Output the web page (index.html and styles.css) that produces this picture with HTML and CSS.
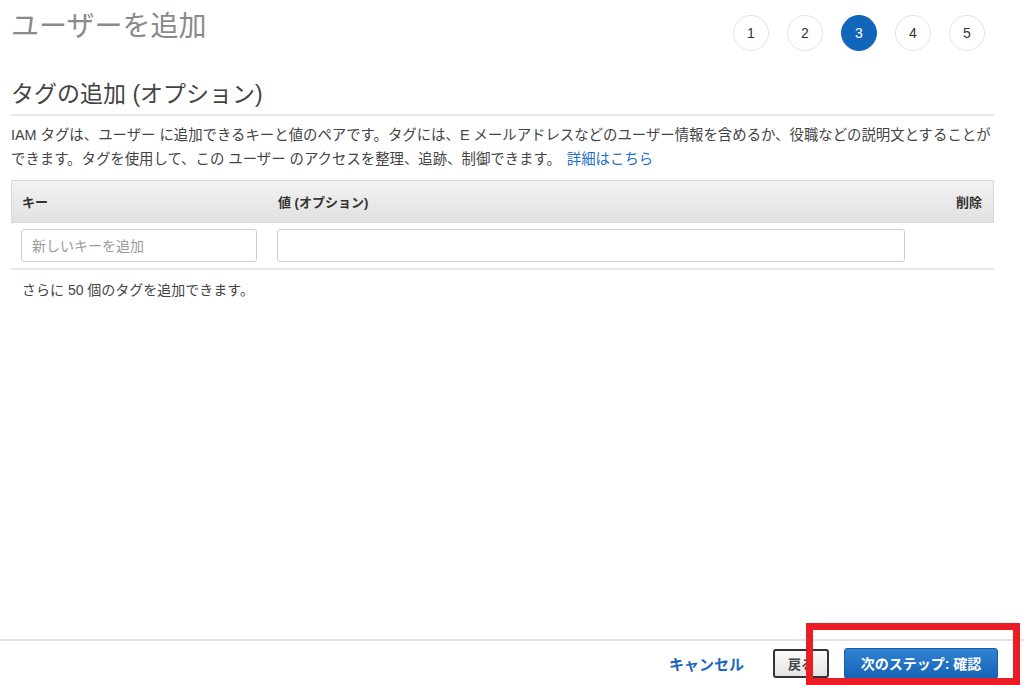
FILE: index.html
```html
<!DOCTYPE html>
<html lang="ja">
<head>
    <meta charset="UTF-8">
    <meta name="viewport" content="width=device-width, initial-scale=1.0">
    <title>ユーザーを追加</title>
    <link rel="stylesheet" href="styles.css">
</head>
<body>
    <div class="page">
        <main class="content">
            <!-- Header -->
            <header class="wizard-header">
                <h1 class="page-title">ユーザーを追加</h1>
                <ol class="steps">
                    <li class="step">1</li>
                    <li class="step">2</li>
                    <li class="step active">3</li>
                    <li class="step">4</li>
                    <li class="step">5</li>
                </ol>
            </header>

            <section class="tags-section">
                <h2 class="section-title">タグの追加 (オプション)</h2>
                <p class="description">
                    IAM タグは、ユーザー に追加できるキーと値のペアです。タグには、E メールアドレスなどのユーザー情報を含めるか、役職などの説明文とすることができます。タグを使用して、この ユーザー のアクセスを整理、追跡、制御できます。<a href="#" class="link">詳細はこちら</a>
                </p>

                <div class="tag-table">
                    <div class="tag-head">
                        <div class="cell">キー</div>
                        <div class="cell">値 (オプション)</div>
                        <div class="cell cell-right">削除</div>
                    </div>
                    <div class="tag-row">
                        <div class="cell"><input type="text" class="field" placeholder="新しいキーを追加"></div>
                        <div class="cell"><input type="text" class="field"></div>
                        <div class="cell"></div>
                    </div>
                </div>

                <p class="remaining">さらに 50 個のタグを追加できます。</p>
            </section>
        </main>

        <!-- Footer -->
        <footer class="wizard-footer">
            <a href="#" class="cancel-link">キャンセル</a>
            <button class="btn btn-back">戻る</button>
            <button class="btn btn-primary">次のステップ: 確認</button>
        </footer>

        <div class="highlight-box"></div>
    </div>
</body>
</html>
```

FILE: styles.css
```css
* {
    margin: 0;
    padding: 0;
    box-sizing: border-box;
}

body {
    font-family: "Liberation Sans", "Noto Sans CJK JP", sans-serif;
    background-color: #fff;
    color: #444;
    font-size: 14px;
}

a {
    text-decoration: none;
    color: inherit;
}

.page {
    position: relative;
    height: 685px;
    display: flex;
    flex-direction: column;
    overflow: hidden;
}

.content {
    flex: 1;
    padding: 0 30px 0 11px;
}

.wizard-header {
    display: flex;
    justify-content: space-between;
    align-items: flex-start;
    height: 78px;
}

.page-title {
    font-size: 28px;
    font-weight: normal;
    color: #8a8a8a;
    line-height: 36px;
    margin-top: 9px;
}

.steps {
    display: flex;
    list-style: none;
    gap: 18px;
    margin-top: 15px;
    margin-right: 9px;
}

.step {
    width: 36px;
    height: 36px;
    border: 1px solid #e3e3e3;
    border-radius: 50%;
    display: flex;
    align-items: center;
    justify-content: center;
    font-size: 14px;
    color: #333;
}

.step.active {
    background-color: #1166bb;
    border-color: #1166bb;
    color: #fff;
}

.section-title {
    font-size: 23px;
    font-weight: normal;
    color: #444;
    line-height: 32px;
    padding-bottom: 4px;
    border-bottom: 2px solid #e6e6e6;
}

.description {
    font-size: 14.4px;
    line-height: 24px;
    margin-top: 7px;
    color: #444;
}

.link {
    color: #1f6fc5;
    margin-left: 6px;
}

.tag-table {
    margin-top: 9px;
}

.tag-head,
.tag-row {
    display: grid;
    grid-template-columns: 256px 648px 1fr;
}

.tag-head {
    height: 43px;
    align-items: center;
    background: linear-gradient(#f2f2f2, #e1e1e1);
    border: 1px solid #d9d9d9;
    font-weight: bold;
    font-size: 13px;
    color: #333;
}

.tag-head .cell {
    padding: 0 10px;
}

.tag-head .cell-right {
    text-align: right;
    padding-right: 11px;
}

.tag-row {
    padding: 6px 0 6px;
    border-bottom: 2px solid #e6e6e6;
}

.tag-row .cell {
    padding: 0 10px;
}

.field {
    width: 100%;
    height: 33px;
    padding: 0 10px;
    border: 1px solid #cfcfcf;
    border-radius: 3px;
    font-family: inherit;
    font-size: 14px;
    color: #444;
}

.field::placeholder {
    color: #9a9a9a;
}

.remaining {
    margin-top: 10px;
    padding-left: 11px;
    line-height: 20px;
}

.wizard-footer {
    height: 46px;
    border-top: 2px solid #e3e3e3;
    display: flex;
    justify-content: flex-end;
    align-items: center;
    padding-right: 26px;
}

.cancel-link {
    color: #1a66b8;
    font-weight: bold;
    font-size: 15px;
    margin-right: 29px;
}

.btn {
    font-family: inherit;
    font-weight: bold;
    border-radius: 3px;
    cursor: pointer;
}

.btn-back {
    width: 56px;
    height: 29px;
    font-size: 13px;
    color: #444;
    background: linear-gradient(#fafafa, #e4e4e4);
    border: 2px solid #333;
    margin-right: 15px;
}

.btn-primary {
    width: 154px;
    height: 31px;
    font-size: 14px;
    color: #fff;
    background: linear-gradient(#2f82d6, #1763b5);
    border: 1px solid #1a5da6;
}

/* screenshot annotation */
.highlight-box {
    position: absolute;
    left: 806px;
    top: 623px;
    width: 214px;
    height: 62px;
    border: 7px solid #ea1c24;
}
```
